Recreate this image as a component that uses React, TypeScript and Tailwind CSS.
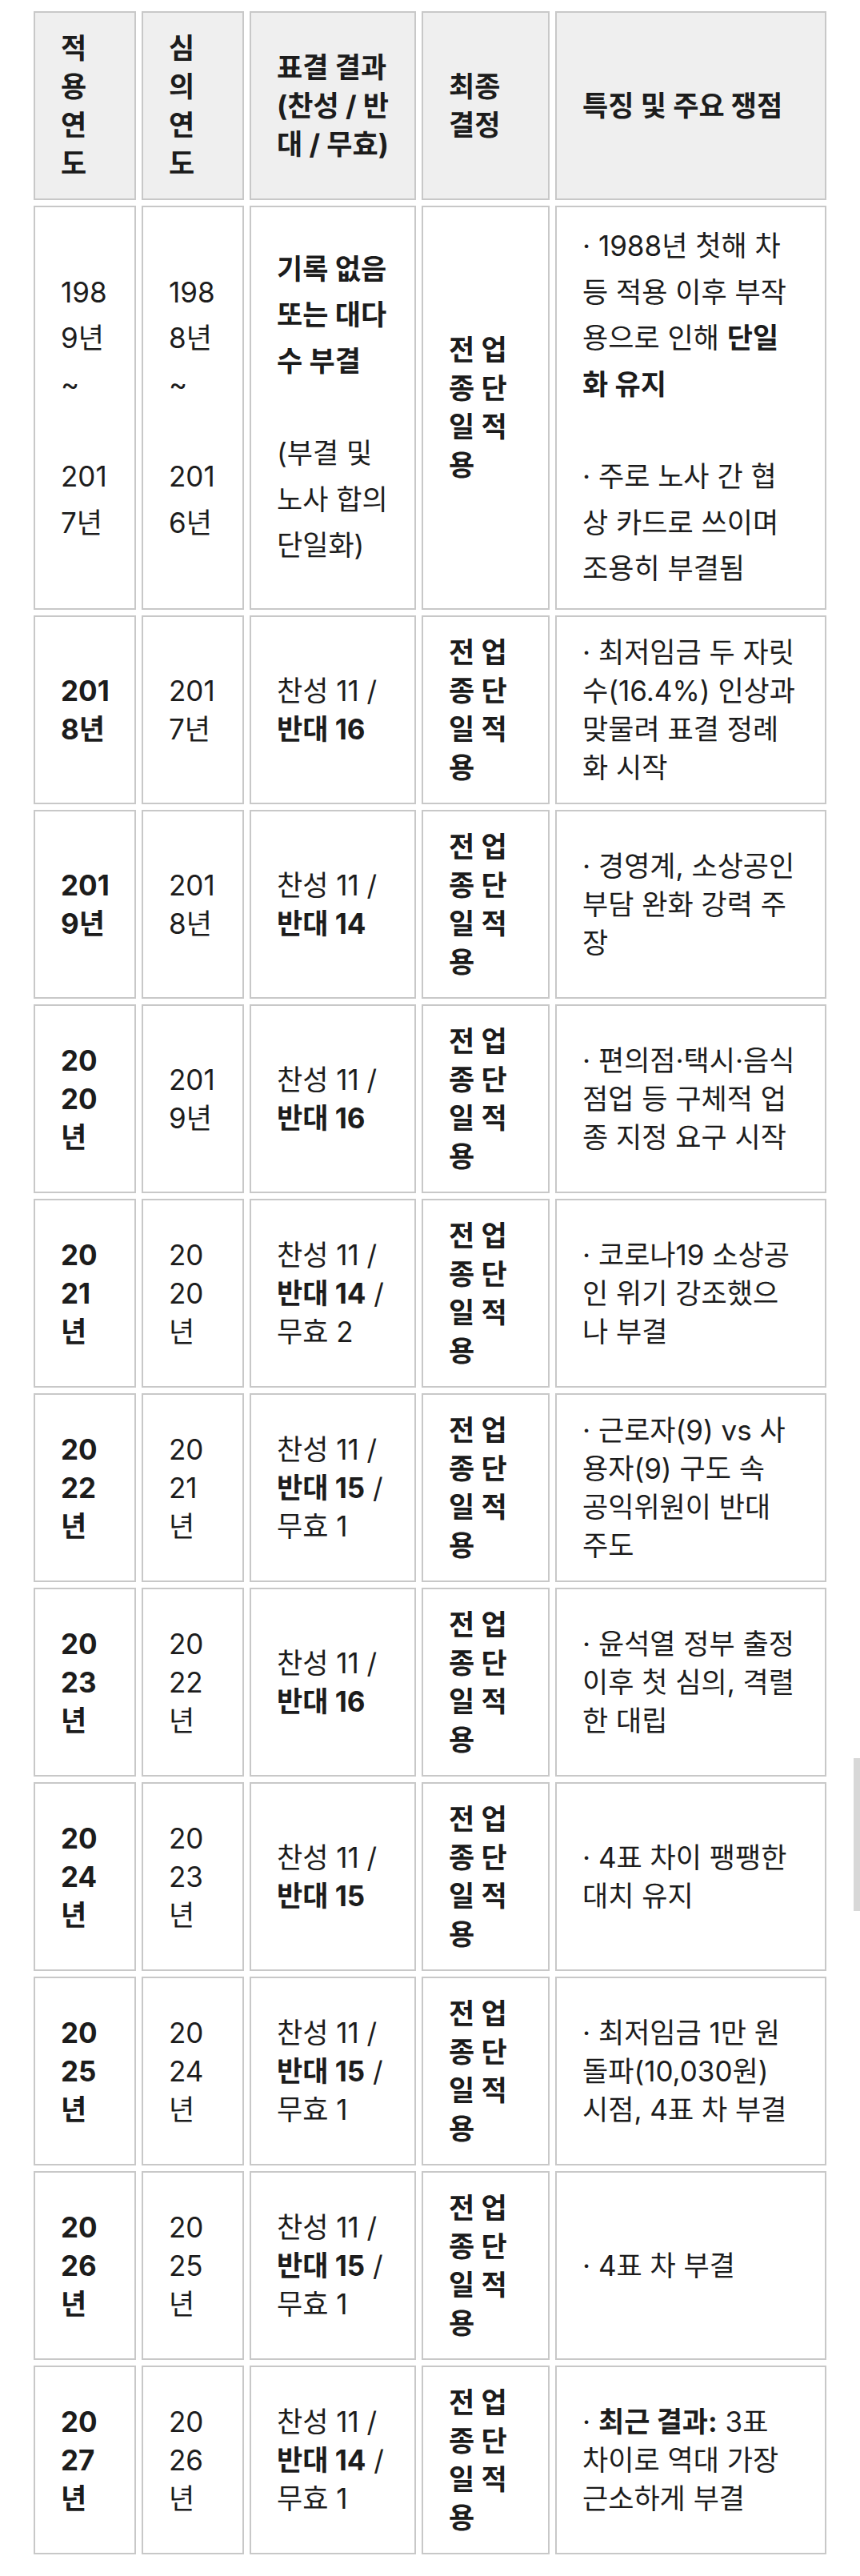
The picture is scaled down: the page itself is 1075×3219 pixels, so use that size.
import type { ReactNode } from "react";

interface Row {
  applied: ReactNode;
  reviewed: ReactNode;
  vote: ReactNode;
  detail: ReactNode;
  tall?: boolean;
}

const ROWS: Row[] = [
  {
    tall: true,
    applied: (
      <>
        1989년 ~<br />
        <br />
        2017년
      </>
    ),
    reviewed: (
      <>
        1988년 ~<br />
        <br />
        2016년
      </>
    ),
    vote: (
      <>
        <b>기록 없음 또는 대다수 부결</b>
        <br />
        <br />
        (부결 및 노사 합의 단일화)
      </>
    ),
    detail: (
      <>
        · 1988년 첫해 차등 적용 이후 부작용으로 인해 <b>단일화 유지</b>
        <br />
        <br />· 주로 노사 간 협상 카드로 쓰이며 조용히 부결됨
      </>
    ),
  },
  { applied: <b>2018년</b>, reviewed: "2017년", vote: <>찬성 11 / <b>반대 16</b></>, detail: "· 최저임금 두 자릿수(16.4%) 인상과 맞물려 표결 정례화 시작" },
  { applied: <b>2019년</b>, reviewed: "2018년", vote: <>찬성 11 / <b>반대 14</b></>, detail: "· 경영계, 소상공인 부담 완화 강력 주장" },
  { applied: <b>2020년</b>, reviewed: "2019년", vote: <>찬성 11 / <b>반대 16</b></>, detail: "· 편의점·택시·음식점업 등 구체적 업종 지정 요구 시작" },
  { applied: <b>2021년</b>, reviewed: "2020년", vote: <>찬성 11 / <b>반대 14</b> / 무효 2</>, detail: "· 코로나19 소상공인 위기 강조했으나 부결" },
  { applied: <b>2022년</b>, reviewed: "2021년", vote: <>찬성 11 / <b>반대 15</b> / 무효 1</>, detail: "· 근로자(9) vs 사용자(9) 구도 속 공익위원이 반대 주도" },
  { applied: <b>2023년</b>, reviewed: "2022년", vote: <>찬성 11 / <b>반대 16</b></>, detail: "· 윤석열 정부 출정 이후 첫 심의, 격렬한 대립" },
  { applied: <b>2024년</b>, reviewed: "2023년", vote: <>찬성 11 / <b>반대 15</b></>, detail: "· 4표 차이 팽팽한 대치 유지" },
  { applied: <b>2025년</b>, reviewed: "2024년", vote: <>찬성 11 / <b>반대 15</b> / 무효 1</>, detail: "· 최저임금 1만 원 돌파(10,030원) 시점, 4표 차 부결" },
  { applied: <b>2026년</b>, reviewed: "2025년", vote: <>찬성 11 / <b>반대 15</b> / 무효 1</>, detail: "· 4표 차 부결" },
  {
    applied: <b>2027년</b>,
    reviewed: "2026년",
    vote: <>찬성 11 / <b>반대 14</b> / 무효 1</>,
    detail: (
      <>
        · <b>최근 결과:</b> 3표 차이로 역대 가장 근소하게 부결
      </>
    ),
  },
];

const HEADERS = ["적용연도", "심의연도", "표결 결과 (찬성 / 반대 / 무효)", "최종 결정", "특징 및 주요 쟁점"];

const cell = "border-2 border-[#c8c8c8] py-5 pl-8 align-middle text-left break-words";

export default function App() {
  return (
    <div className="relative min-h-[3219px] bg-white pl-[35px] pt-[7px] text-[35px] text-[#1c1c1c] proportional-nums [font-family:Inter,'Noto_Sans_CJK_KR',sans-serif]">
      <table className="w-[1005px] table-fixed border-separate border-spacing-[7px]">
        <colgroup>
          <col className="w-[128px]" />
          <col className="w-[128px]" />
          <col className="w-[208px]" />
          <col className="w-[160px]" />
          <col className="w-[339px]" />
        </colgroup>
        <thead>
          <tr>
            {HEADERS.map((h) => (
              <th key={h} className={`${cell} bg-[#efefef] pr-8 font-bold leading-[48px]`}>
                {h}
              </th>
            ))}
          </tr>
        </thead>
        <tbody>
          {ROWS.map((r, i) => {
            const lead = r.tall ? "leading-[57.6px]" : "leading-[48px]";
            return (
              <tr key={i}>
                <td className={`${cell} pr-[27px] ${lead}`}>{r.applied}</td>
                <td className={`${cell} pr-8 ${lead}`}>{r.reviewed}</td>
                <td className={`${cell} pr-8 ${lead}`}>{r.vote}</td>
                <td className={`${cell} pr-8 font-bold leading-[48px]`}>전 업종 단일 적용</td>
                <td className={`${cell} pr-[36px] ${lead}`}>{r.detail}</td>
              </tr>
            );
          })}
        </tbody>
      </table>
      {/* page scroll thumb */}
      <div className="absolute left-[1067px] top-[2197px] h-[191px] w-[8px] bg-[#d8d8d8]" />
    </div>
  );
}
